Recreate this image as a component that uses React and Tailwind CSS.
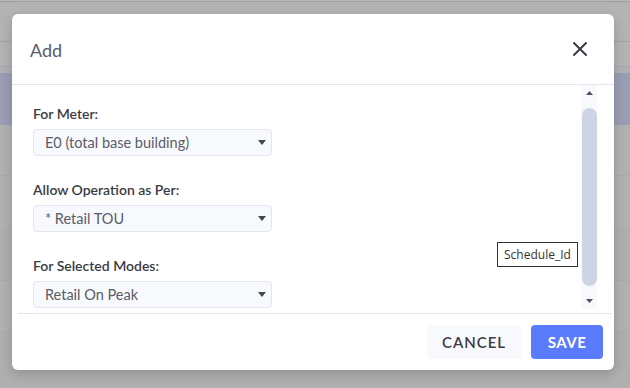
import React from 'react';

const font = { fontFamily: 'Lato, "Open Sans", sans-serif' };

const Caret = () => (
  <svg width="8" height="5" viewBox="0 0 8 5" className="shrink-0">
    <path d="M0 0 L8 0 L4 5 Z" fill="#444652" />
  </svg>
);

const Field = ({ label, value, last }) => (
  <div className={last ? '' : 'mb-[24px]'}>
    <div className="text-[14px] font-semibold text-[#3a3b45] leading-[20px] mb-[5px]">{label}</div>
    <div className="w-[239px] h-[27px] flex items-center justify-between pl-[11px] pr-[5px] bg-[#f8f9fd] border border-[#e3e6f0] rounded-[4px]">
      <span className="text-[14.5px] text-[#5a5c69]">{value}</span>
      <Caret />
    </div>
  </div>
);

const Scrollbar = () => (
  <div className="w-[16px] h-[224px] bg-[#f8f9fc] flex flex-col items-center">
    <div className="h-[16px] flex items-center justify-center">
      <svg width="7" height="4" viewBox="0 0 7 4"><path d="M0 4 L7 4 L3.5 0 Z" fill="#50525e" /></svg>
    </div>
    <div className="w-[15px] flex-1 my-[7px] rounded-full bg-[#cdd4e4]" />
    <div className="h-[16px] flex items-center justify-center">
      <svg width="7" height="4" viewBox="0 0 7 4"><path d="M0 0 L7 0 L3.5 4 Z" fill="#50525e" /></svg>
    </div>
  </div>
);

export default function App() {
  return (
    <div className="relative w-[630px] h-[388px] overflow-hidden bg-[#b2b2b2]" style={font}>
      {/* page behind the overlay */}
      <div className="flex flex-col">
        <div className="h-[1px] bg-[#b8b8b8]" />
        <div className="h-[1px] bg-[#9e9e9e]" />
        <div className="h-[39px] bg-[#b3b3b3]" />
        <div className="h-[1px] bg-[#a2a2a6]" />
        <div className="h-[24px] bg-[#b3b3b3]" />
        <div className="h-[1px] bg-[#a4a6b0]" />
        <div className="h-[6px] bg-[#b0b1b4]" />
        <div className="h-[52px] bg-[#9b9db4]" />
        <div className="h-[51px] bg-[#b1b1b1] border-b border-[#ababab]" />
        <div className="h-[53px] bg-[#b1b1b1] border-b border-[#ababab]" />
        <div className="h-[52px] bg-[#afafaf] border-b border-[#ababab]" />
        <div className="h-[51px] bg-[#b1b1b1] border-b border-[#ababab]" />
        <div className="h-[55px] bg-[#afafaf]" />
      </div>

      {/* modal */}
      <div className="absolute left-[12px] top-[14px] w-[602px] h-[356px] bg-white rounded-[6px] shadow-[0_4px_12px_rgba(0,0,0,0.18)] flex flex-col">
        <div className="h-[71px] flex items-center justify-between pl-[18px] pr-[26px] border-b border-[#e3e6f0] shrink-0">
          <span className="text-[18px] text-[#5a5c69] mt-[3px]">Add</span>
          <svg width="16" height="16" viewBox="0 0 16 16">
            <path d="M2 2 L14 14 M14 2 L2 14" stroke="#3a3b45" strokeWidth="2" strokeLinecap="round" />
          </svg>
        </div>

        <div className="relative flex h-[228px] overflow-hidden">
          <div className="flex-1 pl-[21px] pt-[19px]">
            <Field label="For Meter:" value="E0 (total base building)" />
            <Field label="Allow Operation as Per:" value="* Retail TOU" />
            <Field label="For Selected Modes:" value="Retail On Peak" last />
          </div>
          <div className="pr-[17px]">
            <Scrollbar />
          </div>
          <div className="absolute left-[485px] top-[157px] h-[25px] px-[6px] flex items-center bg-white border border-[#333] text-[12px] text-[#333]" style={{ fontFamily: '"Open Sans", sans-serif' }}>
            Schedule_Id
          </div>
        </div>

        <div className="ml-[6px] mr-[2px] border-t border-[#e3e6f0] flex-1 flex items-center justify-end gap-[10px] pr-[9px]">
          <button className="w-[94px] h-[34px] rounded-[4px] bg-[#f8f9fc] text-[15px] font-semibold tracking-[1px] text-[#3a3b45]">
            CANCEL
          </button>
          <button className="w-[72px] h-[34px] rounded-[4px] bg-[#5b7bfd] text-[15px] font-bold tracking-[0.5px] text-white">
            SAVE
          </button>
        </div>
      </div>
    </div>
  );
}
